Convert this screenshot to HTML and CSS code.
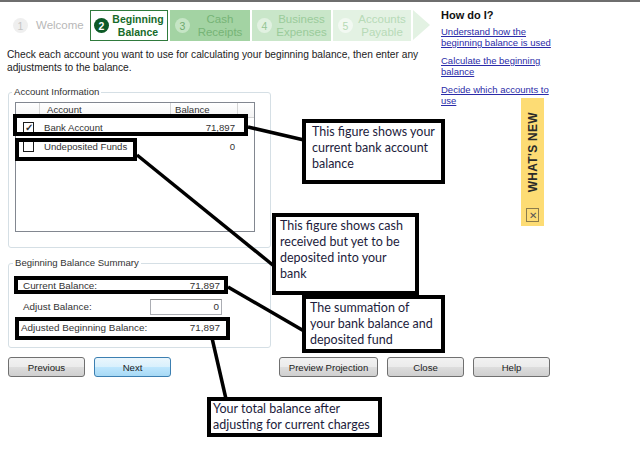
FILE: index.html
```html
<!DOCTYPE html>
<html lang="en">
<head>
    <meta charset="UTF-8">
    <meta name="viewport" content="width=device-width, initial-scale=1.0">
    <title>Beginning Balance</title>
    <link rel="stylesheet" href="styles.css">
</head>
<body>
    <div class="window">
        <div class="top">
            <div class="main">
                <div class="steps">
                    <div class="step welcome"><span class="num">1</span><span class="label">Welcome</span></div>
                    <div class="step active"><span class="num">2</span><span class="label">Beginning<br>Balance</span></div>
                    <div class="step cash"><span class="num">3</span><span class="label">Cash<br>Receipts</span></div>
                    <div class="step business"><span class="num">4</span><span class="label">Business<br>Expenses</span></div>
                    <div class="step payable"><span class="num">5</span><span class="label">Accounts<br>Payable</span></div>
                    <div class="step-arrow"></div>
                </div>

                <p class="intro">Check each account you want to use for calculating your beginning balance, then enter any<br>adjustments to the balance.</p>

                <fieldset class="group accounts">
                    <legend>Account Information</legend>
                    <div class="list">
                        <div class="list-head">
                            <span class="col-check"></span>
                            <span class="col-name">Account</span>
                            <span class="col-bal">Balance</span>
                            <span class="col-end"></span>
                        </div>
                        <div class="list-row">
                            <span class="col-check"><span class="checkbox checked">&#10003;</span></span>
                            <span class="col-name">Bank Account</span>
                            <span class="col-bal">71,897</span>
                        </div>
                        <div class="list-row">
                            <span class="col-check"><span class="checkbox"></span></span>
                            <span class="col-name">Undeposited Funds</span>
                            <span class="col-bal">0</span>
                        </div>
                    </div>
                </fieldset>

                <fieldset class="group summary">
                    <legend>Beginning Balance Summary</legend>
                    <div class="sum-row">
                        <span>Current Balance:</span>
                        <span>71,897</span>
                    </div>
                    <div class="sum-row">
                        <span>Adjust Balance:</span>
                        <span class="adjust-input">0</span>
                    </div>
                    <div class="sum-row adjusted">
                        <span>Adjusted Beginning Balance:</span>
                        <span>71,897</span>
                    </div>
                </fieldset>
            </div>

            <div class="help">
                <h2>How do I?</h2>
                <a href="#">Understand how the<br>beginning balance is used</a>
                <a href="#">Calculate the beginning<br>balance</a>
                <a href="#">Decide which accounts to<br>use</a>
                <div class="whats-new">
                    <span class="whats-new-title">WHAT'S NEW</span>
                    <span class="whats-new-close">&#10005;</span>
                </div>
            </div>
        </div>

        <div class="buttons">
            <button class="btn">Previous</button>
            <button class="btn btn-next">Next</button>
            <button class="btn btn-wide push">Preview Projection</button>
            <button class="btn">Close</button>
            <button class="btn">Help</button>
        </div>
    </div>

    <!-- tutorial annotations drawn over the window -->
    <svg class="marks" width="640" height="461" viewBox="0 0 640 461">
        <g fill="none" stroke="#000" stroke-width="4">
            <rect x="15" y="116" width="231" height="18"/>
            <rect x="17" y="140" width="118" height="19"/>
            <rect x="16" y="278" width="210" height="14"/>
            <rect x="17" y="319" width="211" height="19"/>
        </g>
        <g stroke="#000" stroke-width="3.5">
            <line x1="248" y1="127" x2="304" y2="140"/>
            <line x1="137" y1="155" x2="274" y2="266"/>
            <line x1="228" y1="287" x2="304" y2="331"/>
            <line x1="212" y1="338" x2="226" y2="399"/>
        </g>
    </svg>

    <div class="note note-bank">This figure shows your<br>current bank account<br>balance</div>
    <div class="note note-undeposited">This figure shows cash<br>received but yet to be<br>deposited into your<br>bank</div>
    <div class="note note-sum">The summation of<br>your bank balance and<br>deposited fund</div>
    <div class="note note-total">Your total balance after<br>adjusting for current charges</div>
</body>
</html>
```

FILE: styles.css
```css
* {
    box-sizing: border-box;
}

body {
    margin: 0;
    width: 640px;
    height: 461px;
    overflow: hidden;
    position: relative;
    background: #fff;
    color: #222;
    font-family: "Liberation Sans", Arial, sans-serif;
    font-size: 9.6px;
}

.window {
    border-top: 2px solid #6e6e6e;
}

.top {
    display: flex;
    align-items: flex-start;
}

.main {
    width: 433px;
    padding-left: 7px;
}

/* wizard steps */
.steps {
    display: flex;
    gap: 2px;
    margin-top: 8px;
    height: 31px;
}

.step {
    display: flex;
    align-items: center;
    height: 31px;
}

.step .num {
    flex: none;
    width: 15px;
    height: 15px;
    border-radius: 50%;
    display: flex;
    align-items: center;
    justify-content: center;
    font-size: 10.5px;
}

.step .label {
    flex: 1;
    text-align: center;
    font-size: 11.5px;
    line-height: 13px;
}

.welcome {
    width: 81px;
    padding-left: 6px;
}

.welcome .num {
    background: #efefef;
    color: #c4c4c4;
}

.welcome .label {
    flex: none;
    margin-left: 8px;
    color: #b8b8b8;
}

.active {
    width: 78px;
    border: 1px solid #2f7a3c;
    padding-left: 3px;
}

.active .num {
    background: #0d5a27;
    color: #fff;
    font-weight: bold;
}

.active .label {
    color: #176b2a;
    font-weight: bold;
    font-size: 10.5px;
}

.cash {
    width: 80px;
    background: #a3d3a3;
    padding-left: 5px;
}

.cash .num {
    background: #c5e5c5;
    color: #6fa96f;
}

.cash .label {
    color: #76b476;
}

.business {
    width: 79px;
    background: #c9e6c9;
    padding-left: 5px;
}

.business .num {
    background: #e1f1e1;
    color: #94c594;
}

.business .label {
    color: #9acb9a;
}

.payable {
    width: 78px;
    background: #e3f2e3;
    padding-left: 5px;
}

.payable .num {
    background: #f2f9f2;
    color: #b5d9b5;
}

.payable .label {
    color: #b7dab7;
}

.step-arrow {
    width: 0;
    height: 0;
    border-left: 17px solid #e3f2e3;
    border-top: 15.5px solid transparent;
    border-bottom: 15.5px solid transparent;
}

.intro {
    margin: 7px 0 0;
    font-size: 10.2px;
    line-height: 13px;
}

/* group boxes */
.group {
    margin: 12px 0 0 1px;
    width: 263px;
    border: 1px solid #d5dfe5;
    border-radius: 3px;
    padding: 4px 15px 15px 6px;
}

.group legend {
    padding: 0 2px;
    margin-left: -3px;
    line-height: 12px;
    color: #333;
}

.list {
    height: 130px;
    border: 1px solid #828790;
}

.list-head {
    display: flex;
    height: 15px;
    border-bottom: 1px solid #d5d5d5;
    background: linear-gradient(#fff, #f4f4f4);
    color: #333;
    line-height: 14px;
}

.list-head span {
    border-right: 1px solid #d5d5d5;
}

.list-head .col-end {
    border-right: none;
}

.col-check {
    width: 24px;
    flex: none;
}

.col-name {
    width: 131px;
    flex: none;
    padding-left: 4px;
}

.list-head .col-name {
    padding-left: 7px;
}

.col-bal {
    width: 67px;
    flex: none;
    padding-left: 4px;
}

.list-row .col-bal {
    text-align: right;
    padding-right: 3px;
}

.col-end {
    flex: 1;
}

.list-row {
    display: flex;
    align-items: center;
    height: 19px;
    color: #333;
}

.checkbox {
    display: flex;
    align-items: center;
    justify-content: center;
    width: 11px;
    height: 11px;
    margin-left: 7px;
    border: 1px solid #1c1c1c;
    background: #fff;
    font-size: 10px;
    font-weight: bold;
    line-height: 1;
}

.summary {
    margin-top: 9px;
    padding: 6px 0 9px 14px;
}

.summary legend {
    margin-left: -10px;
}

.sum-row {
    display: flex;
    align-items: center;
    justify-content: space-between;
    width: 197px;
    height: 21px;
    color: #333;
    font-size: 9.9px;
}

.adjusted {
    margin-left: -2px;
    width: 199px;
}

.adjust-input {
    width: 72px;
    height: 16px;
    margin-right: -2px;
    border: 1px solid #abadb3;
    border-top-color: #8e8f8f;
    text-align: right;
    padding-right: 2px;
    line-height: 14px;
    background: #fff;
}

/* help side panel */
.help {
    margin-left: 8px;
    padding-top: 7px;
    width: 140px;
}

.help h2 {
    margin: 0 0 5px;
    font-size: 11px;
    color: #111;
}

.help a {
    display: block;
    margin-bottom: 7px;
    color: #2b2ba8;
    font-size: 9.5px;
    line-height: 11px;
}

.whats-new {
    margin: -15px 0 0 80px;
    width: 23px;
    height: 128px;
    background: #fddc74;
    display: flex;
    flex-direction: column;
    align-items: center;
}

.whats-new-title {
    writing-mode: vertical-rl;
    transform: rotate(180deg);
    margin-top: 14px;
    font-size: 12px;
    font-weight: bold;
    letter-spacing: 0.3px;
    color: #2a2a2a;
}

.whats-new-close {
    margin-top: auto;
    margin-bottom: 4px;
    width: 13px;
    height: 14px;
    border: 1px solid #8c7c4c;
    display: flex;
    align-items: center;
    justify-content: center;
    font-size: 10px;
    color: #555;
}

/* bottom buttons */
.buttons {
    display: flex;
    gap: 9px;
    margin-top: 9px;
    padding-left: 8px;
}

.btn {
    width: 77px;
    height: 20px;
    padding: 0;
    border: 1px solid #707070;
    border-radius: 3px;
    background: linear-gradient(#f2f2f2 0%, #ebebeb 50%, #dddddd 51%, #cfcfcf 100%);
    font-family: inherit;
    font-size: 9.6px;
    color: #222;
}

.btn-next {
    border-color: #3c7fb1;
    background: linear-gradient(#eaf6fd 0%, #d9f0fc 50%, #bee6fd 51%, #a7d9f5 100%);
}

.btn-wide {
    width: 99px;
}

.push {
    margin-left: 99px;
}

/* annotation overlay */
.marks {
    position: absolute;
    top: 0;
    left: 0;
    pointer-events: none;
}

.note {
    position: absolute;
    border: 4px solid #000;
    background: #fff;
    color: #1c1c3c;
    font-family: Lato, "Open Sans", sans-serif;
    font-size: 12.5px;
    line-height: 16px;
    white-space: nowrap;
    padding: 1px 5px;
}

.note-bank {
    left: 302px;
    top: 119px;
    width: 143px;
    height: 65px;
    padding-left: 6px;
}

.note-undeposited {
    left: 272px;
    top: 213px;
    width: 147px;
    height: 82px;
    padding-left: 4px;
}

.note-sum {
    left: 302px;
    top: 295px;
    width: 143px;
    height: 58px;
    padding-left: 4px;
}

.note-total {
    left: 207px;
    top: 397px;
    width: 175px;
    height: 40px;
    padding: 0 2px;
}
```
